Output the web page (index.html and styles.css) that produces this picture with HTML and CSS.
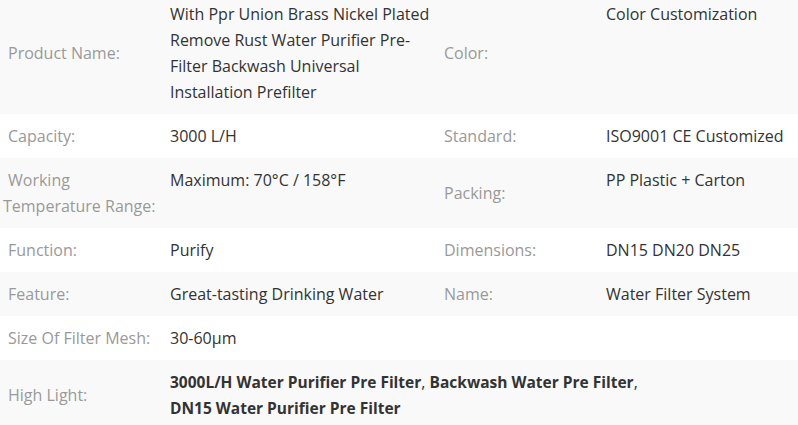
FILE: index.html
```html
<!DOCTYPE html>
<html>
<head>
<meta charset="utf-8">
<link rel="stylesheet" href="styles.css">
</head>
<body>
<table class="specs">
  <colgroup>
    <col class="c-label">
    <col class="c-value1">
    <col class="c-label">
    <col class="c-value2">
  </colgroup>
  <tr class="alt">
    <th>Product Name:</th>
    <td>With Ppr Union Brass Nickel Plated Remove Rust Water Purifier Pre-Filter Backwash Universal Installation Prefilter</td>
    <th>Color:</th>
    <td>Color Customization</td>
  </tr>
  <tr>
    <th>Capacity:</th>
    <td>3000 L/H</td>
    <th>Standard:</th>
    <td>ISO9001 CE Customized</td>
  </tr>
  <tr class="alt">
    <th>Working Temperature Range:</th>
    <td>Maximum: 70°C / 158°F</td>
    <th>Packing:</th>
    <td>PP Plastic + Carton</td>
  </tr>
  <tr>
    <th>Function:</th>
    <td>Purify</td>
    <th>Dimensions:</th>
    <td>DN15 DN20 DN25</td>
  </tr>
  <tr class="alt">
    <th>Feature:</th>
    <td>Great-tasting Drinking Water</td>
    <th>Name:</th>
    <td>Water Filter System</td>
  </tr>
  <tr>
    <th>Size Of Filter Mesh:</th>
    <td colspan="3">30-60μm</td>
  </tr>
  <tr class="alt">
    <th>High Light:</th>
    <td colspan="3"><strong>3000L/H Water Purifier Pre Filter</strong>, <strong>Backwash Water Pre Filter</strong>, <strong>DN15 Water Purifier Pre Filter</strong></td>
  </tr>
</table>
</body>
</html>
```

FILE: styles.css
```css
html, body {
  margin: 0;
  padding: 0;
  background: #ffffff;
}

.specs {
  width: 798px;
  margin-top: -8px;
  border-collapse: collapse;
  table-layout: fixed;
  font-family: "Open Sans", "Noto Sans", sans-serif;
  font-size: 16px;
  line-height: 26px;
}

.c-label { width: 165px; }
.c-value1 { width: 271px; }
.c-value2 { width: 197px; }

.specs tr.alt { background: #f9f9f9; }

.specs th {
  font-weight: normal;
  text-align: left;
  vertical-align: middle;
  color: #999999;
  padding: 9px 0 9px 3px;
  text-indent: 5px;
}

.specs td {
  vertical-align: top;
  color: #333333;
  padding: 9px 5px 9px 5px;
}

.specs td strong {
  font-weight: bold;
  font-size: 15.5px;
  white-space: nowrap;
}
```
